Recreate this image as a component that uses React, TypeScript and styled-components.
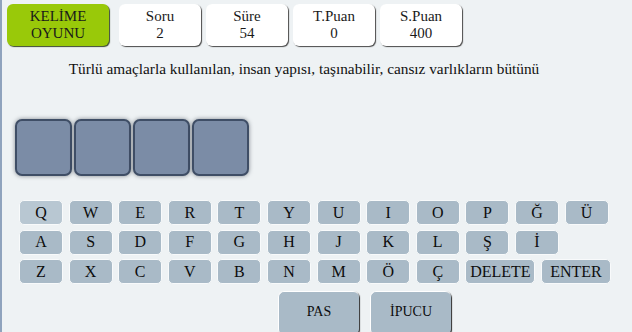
import React from 'react';
import styled, { createGlobalStyle } from 'styled-components';

const serif = '"Liberation Serif", "Times New Roman", serif';

const GlobalStyle = createGlobalStyle`
  html, body {
    margin: 0;
    padding: 0;
    background: #eef2f4;
  }
`;

const Page = styled.div`
  width: 630px;
  height: 332px;
  overflow: hidden;
  background: #eef2f4;
  border-left: 2px solid #8fa3bd;
  font-family: ${serif};
  color: #111;
`;

const Header = styled.div`
  display: flex;
  align-items: flex-start;
  gap: 5px;
  padding: 4px 0 0 5px;
`;

const TitleBox = styled.div`
  width: 102px;
  height: 42px;
  margin-right: 5px;
  box-sizing: border-box;
  background: #99c909;
  border-radius: 6px;
  box-shadow: 1px 1px 1px #3c4a30;
  display: flex;
  flex-direction: column;
  align-items: center;
  justify-content: center;
  font-family: ${serif};
  font-size: 15px;
  line-height: 17px;
  color: #1a1a1a;
`;

const StatCard = styled.div`
  width: 82px;
  height: 42px;
  box-sizing: border-box;
  background: #ffffff;
  border-radius: 6px;
  box-shadow: 1px 1px 1px #4a4a4a;
  display: flex;
  flex-direction: column;
  align-items: center;
  justify-content: center;
  font-family: ${serif};
  font-size: 15px;
  line-height: 17px;
  color: #1a1a1a;
`;

const Question = styled.p`
  margin: 14px 0 0 0;
  padding-right: 26px;
  text-align: center;
  font-family: ${serif};
  font-size: 15.3px;
  line-height: 18px;
  color: #111;
`;

const Slots = styled.div`
  display: flex;
  gap: 2px;
  padding: 41px 0 0 13px;
`;

const Slot = styled.div`
  width: 57px;
  height: 57px;
  box-sizing: border-box;
  background: #7b8ca6;
  border: 2px solid #3f4e66;
  border-radius: 7px;
  box-shadow: 0 0 4px rgba(40, 50, 60, 0.55);
`;

const Keyboard = styled.div`
  display: flex;
  flex-direction: column;
  gap: 4.5px;
  padding: 24px 0 0 17px;
`;

const KeyRow = styled.div`
  display: flex;
  gap: 5.6px;
`;

const Key = styled.div<{ $wide?: boolean; $hover?: boolean }>`
  width: ${p => (p.$wide ? '70px' : '44px')};
  height: 25px;
  box-sizing: border-box;
  border: 1px solid #f8fafb;
  border-radius: 5px;
  background: ${p => (p.$hover ? '#b8c7d2' : '#a9bac7')};
  display: flex;
  align-items: center;
  justify-content: center;
  font-family: ${serif};
  font-size: 16px;
  color: #0d0d0d;
`;

const Actions = styled.div`
  display: flex;
  gap: 11px;
  padding: 7px 0 0 276px;
`;

const ActionButton = styled.div`
  width: 81px;
  height: 44px;
  box-sizing: border-box;
  background: #a9bac7;
  border-radius: 6px;
  border-top: 1px solid #ffffff;
  border-left: 1px solid #ffffff;
  box-shadow: 1px 1px 1px #2e2e2e;
  display: flex;
  align-items: center;
  justify-content: center;
  font-family: ${serif};
  font-size: 14px;
  padding-bottom: 4px;
  color: #0d0d0d;
`;

const stats = [
  { label: 'Soru', value: '2' },
  { label: 'Süre', value: '54' },
  { label: 'T.Puan', value: '0' },
  { label: 'S.Puan', value: '400' },
];

const rows: string[][] = [
  ['Q', 'W', 'E', 'R', 'T', 'Y', 'U', 'I', 'O', 'P', 'Ğ', 'Ü'],
  ['A', 'S', 'D', 'F', 'G', 'H', 'J', 'K', 'L', 'Ş', 'İ'],
  ['Z', 'X', 'C', 'V', 'B', 'N', 'M', 'Ö', 'Ç', 'DELETE', 'ENTER'],
];

export default function App() {
  return (
    <Page>
      <GlobalStyle />
      <Header>
        <TitleBox>
          <span>KELİME</span>
          <span>OYUNU</span>
        </TitleBox>
        {stats.map(s => (
          <StatCard key={s.label}>
            <span>{s.label}</span>
            <span>{s.value}</span>
          </StatCard>
        ))}
      </Header>
      <Question>
        Türlü amaçlarla kullanılan, insan yapısı, taşınabilir, cansız varlıkların bütünü
      </Question>
      <Slots>
        {[0, 1, 2, 3].map(i => <Slot key={i} />)}
      </Slots>
      <Keyboard>
        {rows.map((row, ri) => (
          <KeyRow key={ri}>
            {row.map(k => (
              <Key key={k} $wide={k.length > 1} $hover={k === 'Q'}>
                {k}
              </Key>
            ))}
          </KeyRow>
        ))}
      </Keyboard>
      <Actions>
        <ActionButton>PAS</ActionButton>
        <ActionButton>İPUCU</ActionButton>
      </Actions>
    </Page>
  );
}
